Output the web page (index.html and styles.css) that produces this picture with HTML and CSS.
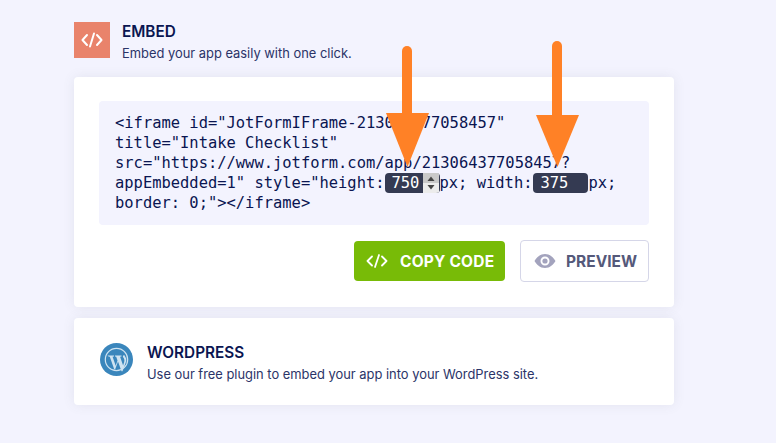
FILE: index.html
```html
<!DOCTYPE html>
<html lang="en">
<head>
<meta charset="utf-8">
<title>Embed</title>
<link rel="stylesheet" href="styles.css">
</head>
<body>
<main class="page">
  <header class="head">
    <div class="head-icon">
      <svg width="22" height="16" viewBox="0 0 22 16" fill="none" stroke="#fff" stroke-width="2" stroke-linecap="round" stroke-linejoin="round"><path d="M6 3 1.500 8 6 13M16 3l4.500 5L16 13M13 1.500 9 14.500"/></svg>
    </div>
    <div>
      <h1 class="title">EMBED</h1>
      <p class="desc">Embed your app easily with one click.</p>
    </div>
  </header>

  <section class="card main-card">
    <div class="code">&lt;iframe id="JotFormIFrame-213064377058457"<br>title="Intake Checklist"<br>src="https://www.jotform.com/app/213064377058457?<br>appEmbedded=1" style="height:<span class="num num-spin">750<span class="spin"><svg width="16" height="20" viewBox="0 0 16 20"><rect width="16" height="10" fill="#c9c9c9"/><path d="M8 3.500 11.500 8h-7z" fill="#444"/><path d="M8 16.500 4.500 12h7z" fill="#444"/></svg></span></span>px; width:<span class="num num-plain">375</span>px;<br>border: 0;"&gt;&lt;/iframe&gt;</div>
    <div class="actions">
      <button class="btn btn-copy">
        <svg width="22" height="14" viewBox="0 0 22 14" fill="none" stroke="#fff" stroke-width="1.800" stroke-linecap="round" stroke-linejoin="round"><path d="M6 2.500 1.500 7 6 11.500M16 2.500 20.500 7 16 11.500M13 1 9 13"/></svg>
        COPY CODE
      </button>
      <button class="btn btn-preview">
        <svg width="22" height="16" viewBox="0 0 22 16"><path fill="#a3a3bd" fill-rule="evenodd" d="M11 1C6 1 2.500 4.500 .5 8c2 3.500 5.500 7 10.500 7s8.500-3.500 10.500-7C19.500 4.500 16 1 11 1zm0 2.500a4.500 4.500 0 1 1 0 9 4.500 4.500 0 0 1 0-9z"/><circle cx="11" cy="8" r="2.600" fill="#a3a3bd"/></svg>
        PREVIEW
      </button>
    </div>
  </section>

  <section class="card wp-card">
    <svg class="wp-logo" width="33" height="33" viewBox="0 0 33 33">
      <circle cx="16.500" cy="16.500" r="16.500" fill="#3a86bc"/>
      <circle cx="16.500" cy="16.500" r="11.200" fill="none" stroke="#cfe3f1" stroke-width="1.200"/>
      <path fill="#cfe3f1" d="M7.500 12.500h6.500v1l-1.400.2 3.100 9 1.800-5.300-1.300-3.700-1.200-.2v-1h6.500v1l-1.400.2 3 8.900 1.100-3.600c.6-2.200-.2-3.500-.9-4.400-.6-1-.6-2.300.9-2.700l2 3.500c.3 2-.3 3.700-1 5.500l-2.700 7.300h-1L18 18.400l-2.800 7.800h-1L9.800 13.800l-1.300-.2z"/>
    </svg>
    <div>
      <h2 class="title">WORDPRESS</h2>
      <p class="desc">Use our free plugin to embed your app into your WordPress site.</p>
    </div>
  </section>
</main>

<svg class="arrow arrow-a" width="46" height="122" viewBox="0 0 46 122">
  <path d="M23 5v72" stroke="#ff8126" stroke-width="10" stroke-linecap="round" fill="none"/>
  <path d="M2 67h43L23.500 121z" fill="#ff8126"/>
</svg>
<svg class="arrow arrow-b" width="46" height="128" viewBox="0 0 46 128">
  <path d="M23 5v80" stroke="#ff8126" stroke-width="10" stroke-linecap="round" fill="none"/>
  <path d="M2 74h43L23.500 126z" fill="#ff8126"/>
</svg>
</body>
</html>
```

FILE: styles.css
```css
* { box-sizing: border-box; }
html, body { margin: 0; height: 100%; }
body {
  background: #f3f3fe;
  overflow: hidden;
  position: relative;
  font-family: Inter, "Noto Sans", sans-serif;
  color: #0a1551;
}
.page {
  width: 600px;
  margin-left: 74px;
  padding-top: 22px;
  display: flex;
  flex-direction: column;
}
.head {
  display: flex;
  gap: 12px;
  height: 55px;
}
.head-icon {
  width: 36px;
  height: 36px;
  background: #e9836b;
  display: flex;
  align-items: center;
  justify-content: center;
}
.title {
  margin: 0;
  font-size: 15.300px;
  line-height: 20px;
  font-weight: 600;
  color: #0a1551;
}
.desc {
  margin: 3px 0 0;
  font-size: 12.900px;
  line-height: 17px;
  color: #2b3468;
}
.card {
  background: #fff;
  border-radius: 4px;
  box-shadow: 0 0 12px rgba(84, 95, 111, .1);
}
.main-card {
  height: 230px;
  padding: 24px 25px 0;
}
.code {
  height: 124px;
  padding: 12px 16px;
  background: #f3f3fe;
  border-radius: 4px;
  font-family: "DejaVu Sans Mono", monospace;
  font-size: 15.450px;
  line-height: 20px;
  color: #0a1551;
  white-space: nowrap;
}
.num {
  display: inline-flex;
  align-items: center;
  width: 55px;
  height: 20px;
  vertical-align: top;
  padding-left: 7px;
  background: #343a52;
  color: #fff;
  border-radius: 4px;
  overflow: hidden;
}
.num-plain { margin-left: 1px; }
.num-spin { justify-content: space-between; padding-right: 1px; }
.spin {
  width: 16px;
  height: 20px;
  display: flex;
  background: #ececec;
}
.actions {
  display: flex;
  justify-content: flex-end;
  align-items: center;
  gap: 15px;
  margin-top: 15px;
}
.btn {
  display: flex;
  align-items: center;
  border-radius: 4px;
  font-family: Inter, "Noto Sans", sans-serif;
  font-size: 15.500px;
  font-weight: 700;
  white-space: nowrap;
  padding: 0;
}
.btn-copy {
  width: 151px;
  height: 40px;
  gap: 12px;
  padding-left: 12px;
  background: #78bb07;
  border: 0;
  color: #fff;
  letter-spacing: .2px;
}
.btn-preview {
  width: 129px;
  height: 42px;
  gap: 10px;
  padding-left: 13px;
  background: #fff;
  border: 1px solid #d5d6e8;
  color: #55597a;
}
.wp-card {
  height: 87px;
  margin-top: 11px;
  display: flex;
  align-items: flex-start;
  gap: 14px;
  padding: 25px 26px 0;
}
.wp-logo { flex: none; }
.arrow { position: absolute; }
.arrow-a { left: 384px; top: 46px; }
.arrow-b { left: 534px; top: 41px; }
```
